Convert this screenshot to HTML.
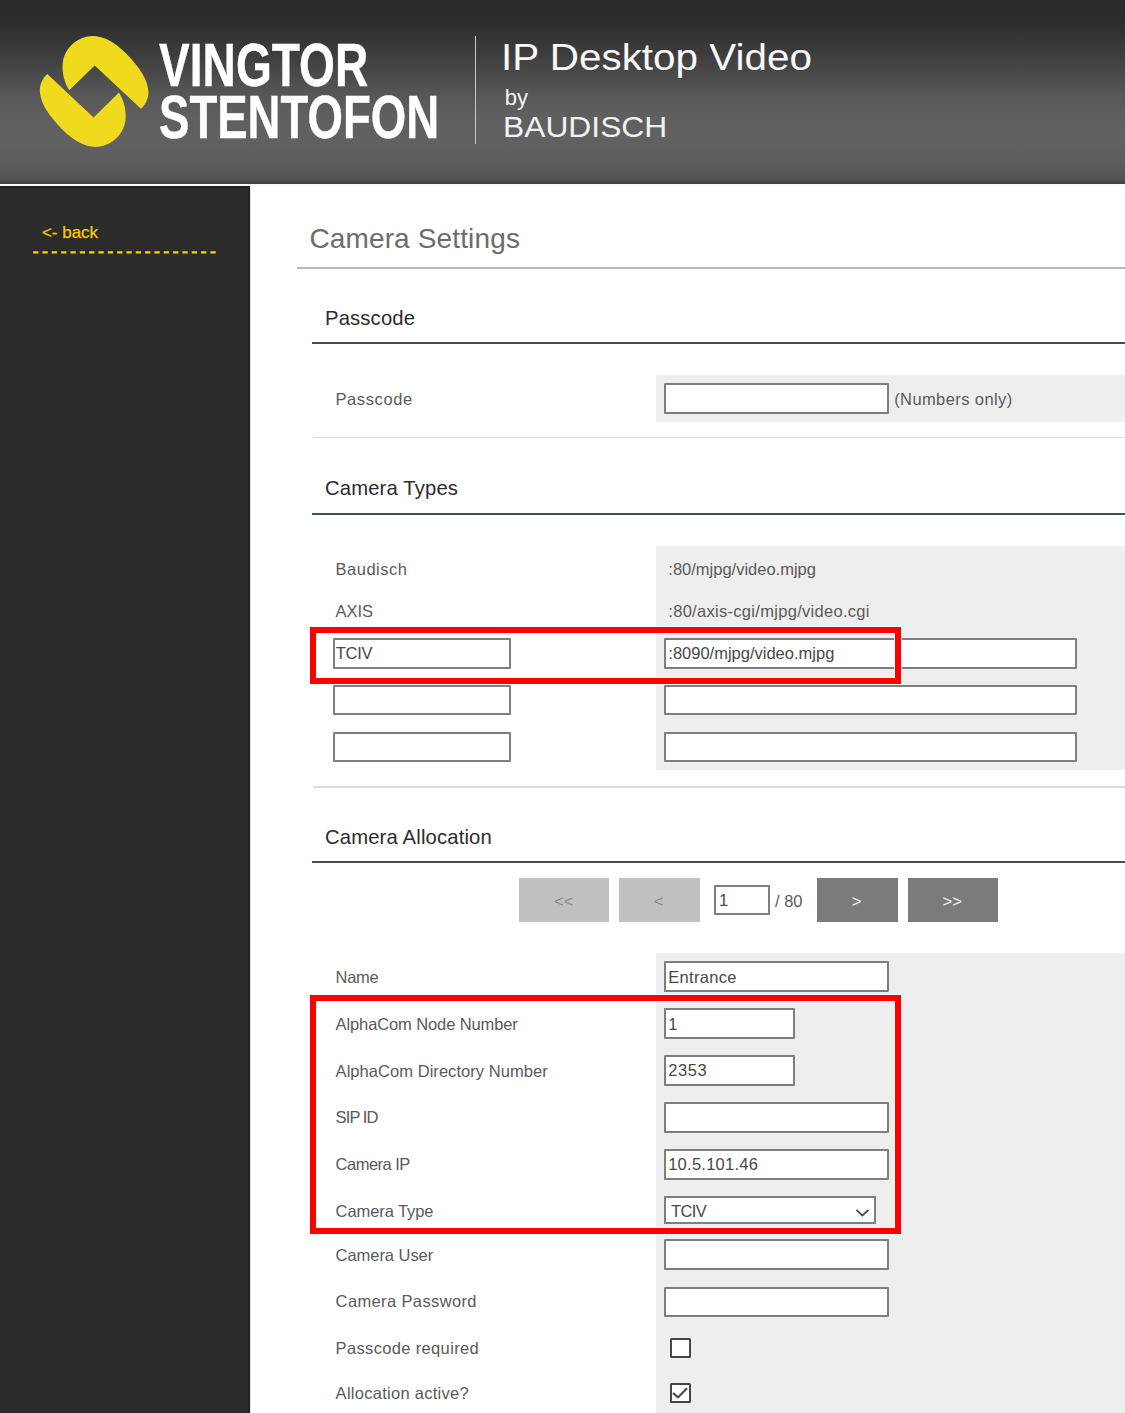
<!DOCTYPE html>
<html><head><meta charset="utf-8"><style>
html,body{margin:0;padding:0;width:1125px;height:1413px;overflow:hidden;background:#fff;}
.t{position:absolute;white-space:nowrap;font-family:"Liberation Sans",sans-serif;}
.b{position:absolute;}
</style></head><body>
<div class="b" style="left:0.00px;top:0.00px;width:1125.00px;height:184.00px;background:linear-gradient(to bottom,#2a2a2a 0px,#2c2c2c 18px,#3b3b3b 50px,#4a4a4a 75px,#575757 95px,#5f5f5f 115px,#616161 140px,#5d5d5d 163px,#555 176px,#4e4e4e 181px,#444 183px,#404040 184px);"></div>
<div class="b" style="left:0.00px;top:184.00px;width:1125.00px;height:2.00px;background:#fafafa;"></div>
<div class="b" style="left:0.00px;top:186.00px;width:250.00px;height:1227.00px;background:#2b2b2b;"></div>
<div class="b" style="left:0.00px;top:186.00px;width:250.00px;height:1.80px;background:#1c1c1c;"></div>
<div class="b" style="left:248.00px;top:186.00px;width:2.00px;height:1227.00px;background:#222;"></div>
<div class="b" style="left:250.00px;top:186.00px;width:1.00px;height:1227.00px;background:#e4e4e4;"></div>
<svg class="b" style="left:30px;top:25px;width:130px;height:130px" viewBox="0 0 1125 1125">
<g fill="#f0da1e">
<path d="M340,565 L560,350 L960,725 C1005,685 1030,625 1024,565 C1014,465 950,370 830,245 C735,150 640,95 540,95 C420,97 300,190 283,330 C275,420 300,500 340,565 Z"/>
<path d="M340,565 L560,350 L960,725 C1005,685 1030,625 1024,565 C1014,465 950,370 830,245 C735,150 640,95 540,95 C420,97 300,190 283,330 C275,420 300,500 340,565 Z" transform="rotate(180 555 575)"/>
</g></svg>
<div class="t" style="left:159.20px;top:34.66px;font-size:61px;line-height:61px;color:#fff;font-weight:bold;transform:scaleX(0.756);transform-origin:0 0;-webkit-text-stroke:0.4px #fff;">VINGTOR</div>
<div class="t" style="left:158.50px;top:86.66px;font-size:61px;line-height:61px;color:#fff;font-weight:bold;transform:scaleX(0.747);transform-origin:0 0;-webkit-text-stroke:0.4px #fff;">STENTOFON</div>
<div class="b" style="left:474.70px;top:36.00px;width:1.50px;height:108.00px;background:#c9c9c9;"></div>
<div class="t" style="left:500.80px;top:38.68px;font-size:37px;line-height:37px;color:#f8f8f8;font-weight:normal;transform:scaleX(1.093);transform-origin:0 0;">IP Desktop Video</div>
<div class="t" style="left:504.80px;top:86.58px;font-size:22px;line-height:22px;color:#f4f4f4;font-weight:normal;">by</div>
<div class="t" style="left:503.30px;top:112.65px;font-size:29px;line-height:29px;color:#f2f2f2;font-weight:normal;transform:scaleX(1.096);transform-origin:0 0;">BAUDISCH</div>
<div class="t" style="left:41.90px;top:223.81px;font-size:17px;line-height:17px;color:#f0cc00;font-weight:normal;-webkit-text-stroke:0.25px #f0cc00;">&lt;- back</div>
<svg class="b" style="left:32.5px;top:250px;width:184px;height:5px" viewBox="0 0 184 5"><line x1="0" y1="2.4" x2="183" y2="2.4" stroke="#f8d400" stroke-width="2.2" stroke-dasharray="5.3 4.03" stroke-dashoffset="-0.1"/></svg>
<div class="t" style="left:309.40px;top:224.60px;font-size:28px;line-height:28px;color:#6c6c6c;font-weight:normal;letter-spacing:0.14px;">Camera Settings</div>
<div class="b" style="left:297.00px;top:267.00px;width:828.00px;height:2.00px;background:#b8b8b8;"></div>
<div class="t" style="left:325.00px;top:307.96px;font-size:20.25px;line-height:20.25px;color:#2c2c2c;font-weight:normal;letter-spacing:0.15px;">Passcode</div>
<div class="b" style="left:312.30px;top:342.00px;width:812.70px;height:2.00px;background:#465050;"></div>
<div class="b" style="left:656.00px;top:375.00px;width:469.00px;height:46.50px;background:#eeeeee;"></div>
<div class="t" style="left:335.40px;top:390.53px;font-size:16.5px;line-height:16.5px;color:#5a5a5a;font-weight:normal;letter-spacing:0.614px;">Passcode</div>
<div class="b" style="left:664.00px;top:383.00px;width:225.00px;height:31.00px;background:#fff;border:2px solid #7e7e7e;border-radius:1px;box-sizing:border-box;"></div>
<div class="t" style="left:894.20px;top:390.53px;font-size:16.5px;line-height:16.5px;color:#5a5a5a;font-weight:normal;letter-spacing:0.400px;">(Numbers only)</div>
<div class="b" style="left:312.50px;top:436.95px;width:812.50px;height:1.50px;background:#dcdcdc;"></div>
<div class="t" style="left:325.00px;top:478.46px;font-size:20.25px;line-height:20.25px;color:#2c2c2c;font-weight:normal;letter-spacing:0.15px;">Camera Types</div>
<div class="b" style="left:312.30px;top:512.50px;width:812.70px;height:2.00px;background:#465050;"></div>
<div class="b" style="left:656.00px;top:545.50px;width:469.00px;height:224.90px;background:#eeeeee;"></div>
<div class="t" style="left:335.50px;top:560.93px;font-size:16.5px;line-height:16.5px;color:#5a5a5a;font-weight:normal;letter-spacing:0.514px;">Baudisch</div>
<div class="t" style="left:668.30px;top:560.93px;font-size:16.5px;line-height:16.5px;color:#5a5a5a;font-weight:normal;">:80/mjpg/video.mjpg</div>
<div class="t" style="left:335.50px;top:603.23px;font-size:16.5px;line-height:16.5px;color:#5a5a5a;font-weight:normal;">AXIS</div>
<div class="t" style="left:668.30px;top:603.23px;font-size:16.5px;line-height:16.5px;color:#5a5a5a;font-weight:normal;letter-spacing:0.296px;">:80/axis-cgi/mjpg/video.cgi</div>
<div class="b" style="left:333.00px;top:638.00px;width:178.00px;height:30.80px;background:#fff;border:2px solid #7e7e7e;border-radius:1px;box-sizing:border-box;"></div>
<div class="t" style="left:335.70px;top:645.43px;font-size:16.5px;line-height:16.5px;color:#484848;font-weight:normal;letter-spacing:-0.233px;">TCIV</div>
<div class="b" style="left:664.00px;top:638.00px;width:412.50px;height:30.80px;background:#fff;border:2px solid #7e7e7e;border-radius:1px;box-sizing:border-box;"></div>
<div class="t" style="left:668.30px;top:645.43px;font-size:16.5px;line-height:16.5px;color:#484848;font-weight:normal;">:8090/mjpg/video.mjpg</div>
<div class="b" style="left:333.00px;top:685.20px;width:178.00px;height:30.30px;background:#fff;border:2px solid #7e7e7e;border-radius:1px;box-sizing:border-box;"></div>
<div class="b" style="left:664.00px;top:685.20px;width:412.50px;height:30.30px;background:#fff;border:2px solid #7e7e7e;border-radius:1px;box-sizing:border-box;"></div>
<div class="b" style="left:333.00px;top:731.80px;width:178.00px;height:30.60px;background:#fff;border:2px solid #7e7e7e;border-radius:1px;box-sizing:border-box;"></div>
<div class="b" style="left:664.00px;top:731.80px;width:412.50px;height:30.60px;background:#fff;border:2px solid #7e7e7e;border-radius:1px;box-sizing:border-box;"></div>
<div class="b" style="left:312.50px;top:786.25px;width:812.50px;height:1.50px;background:#dcdcdc;"></div>
<div class="t" style="left:325.00px;top:826.96px;font-size:20.25px;line-height:20.25px;color:#2c2c2c;font-weight:normal;letter-spacing:0.15px;">Camera Allocation</div>
<div class="b" style="left:312.30px;top:861.00px;width:812.70px;height:2.00px;background:#465050;"></div>
<div class="b" style="left:519.00px;top:878.40px;width:90.00px;height:43.30px;background:#c0c0c0;"></div>
<div class="b" style="left:619.00px;top:878.40px;width:81.00px;height:43.30px;background:#c0c0c0;"></div>
<div class="b" style="left:817.00px;top:878.40px;width:81.40px;height:43.30px;background:#7b7b7b;"></div>
<div class="b" style="left:908.00px;top:878.40px;width:90.40px;height:43.30px;background:#7b7b7b;"></div>
<div class="t" style="left:554.00px;top:892.53px;font-size:16.5px;line-height:16.5px;color:#8a8a8a;font-weight:normal;transform:scaleY(0.95);">&lt;&lt;</div>
<div class="t" style="left:653.80px;top:892.53px;font-size:16.5px;line-height:16.5px;color:#8a8a8a;font-weight:normal;transform:scaleY(0.95);">&lt;</div>
<div class="t" style="left:851.80px;top:892.53px;font-size:16.5px;line-height:16.5px;color:#f4f4f4;font-weight:normal;transform:scaleY(0.95);">&gt;</div>
<div class="t" style="left:942.50px;top:892.53px;font-size:16.5px;line-height:16.5px;color:#f4f4f4;font-weight:normal;transform:scaleY(0.95);">&gt;&gt;</div>
<div class="b" style="left:714.30px;top:885.20px;width:55.40px;height:30.30px;background:#fff;border:2px solid #7e7e7e;border-radius:1px;box-sizing:border-box;"></div>
<div class="t" style="left:719.00px;top:892.38px;font-size:16.5px;line-height:16.5px;color:#484848;font-weight:normal;">1</div>
<div class="t" style="left:775.00px;top:892.53px;font-size:16.5px;line-height:16.5px;color:#5a5a5a;font-weight:normal;">/ 80</div>
<div class="b" style="left:656.20px;top:953.30px;width:468.80px;height:459.70px;background:#eeeeee;"></div>
<div class="t" style="left:335.60px;top:968.73px;font-size:16.5px;line-height:16.5px;color:#5a5a5a;font-weight:normal;letter-spacing:-0.300px;">Name</div>
<div class="b" style="left:664.00px;top:961.20px;width:225.00px;height:30.60px;background:#fff;border:2px solid #7e7e7e;border-radius:1px;box-sizing:border-box;"></div>
<div class="t" style="left:668.20px;top:968.53px;font-size:16.5px;line-height:16.5px;color:#484848;font-weight:normal;letter-spacing:0.314px;">Entrance</div>
<div class="t" style="left:335.60px;top:1015.63px;font-size:16.5px;line-height:16.5px;color:#5a5a5a;font-weight:normal;letter-spacing:-0.111px;">AlphaCom Node Number</div>
<div class="b" style="left:664.00px;top:1008.40px;width:130.80px;height:30.40px;background:#fff;border:2px solid #7e7e7e;border-radius:1px;box-sizing:border-box;"></div>
<div class="t" style="left:668.20px;top:1015.63px;font-size:16.5px;line-height:16.5px;color:#484848;font-weight:normal;">1</div>
<div class="t" style="left:335.60px;top:1062.83px;font-size:16.5px;line-height:16.5px;color:#5a5a5a;font-weight:normal;letter-spacing:0.050px;">AlphaCom Directory Number</div>
<div class="b" style="left:664.00px;top:1055.20px;width:130.80px;height:30.40px;background:#fff;border:2px solid #7e7e7e;border-radius:1px;box-sizing:border-box;"></div>
<div class="t" style="left:668.20px;top:1062.43px;font-size:16.5px;line-height:16.5px;color:#484848;font-weight:normal;letter-spacing:0.600px;">2353</div>
<div class="t" style="left:335.60px;top:1109.43px;font-size:16.5px;line-height:16.5px;color:#5a5a5a;font-weight:normal;letter-spacing:-0.900px;">SIP ID</div>
<div class="b" style="left:664.00px;top:1101.90px;width:225.00px;height:30.90px;background:#fff;border:2px solid #7e7e7e;border-radius:1px;box-sizing:border-box;"></div>
<div class="t" style="left:335.60px;top:1156.03px;font-size:16.5px;line-height:16.5px;color:#5a5a5a;font-weight:normal;letter-spacing:-0.512px;">Camera IP</div>
<div class="b" style="left:664.00px;top:1149.00px;width:225.00px;height:30.60px;background:#fff;border:2px solid #7e7e7e;border-radius:1px;box-sizing:border-box;"></div>
<div class="t" style="left:668.20px;top:1156.33px;font-size:16.5px;line-height:16.5px;color:#484848;font-weight:normal;letter-spacing:0.260px;">10.5.101.46</div>
<div class="t" style="left:335.60px;top:1203.03px;font-size:16.5px;line-height:16.5px;color:#5a5a5a;font-weight:normal;letter-spacing:-0.090px;">Camera Type</div>
<div class="t" style="left:335.60px;top:1247.03px;font-size:16.5px;line-height:16.5px;color:#5a5a5a;font-weight:normal;letter-spacing:-0.050px;">Camera User</div>
<div class="b" style="left:664.00px;top:1239.40px;width:225.00px;height:30.40px;background:#fff;border:2px solid #7e7e7e;border-radius:1px;box-sizing:border-box;"></div>
<div class="t" style="left:335.60px;top:1293.43px;font-size:16.5px;line-height:16.5px;color:#5a5a5a;font-weight:normal;letter-spacing:0.371px;">Camera Password</div>
<div class="b" style="left:664.00px;top:1286.50px;width:225.00px;height:30.60px;background:#fff;border:2px solid #7e7e7e;border-radius:1px;box-sizing:border-box;"></div>
<div class="t" style="left:335.60px;top:1340.03px;font-size:16.5px;line-height:16.5px;color:#5a5a5a;font-weight:normal;letter-spacing:0.344px;">Passcode required</div>
<div class="t" style="left:335.60px;top:1385.43px;font-size:16.5px;line-height:16.5px;color:#5a5a5a;font-weight:normal;letter-spacing:0.276px;">Allocation active?</div>
<div class="b" style="left:664.00px;top:1195.80px;width:212.40px;height:27.80px;background:#fff;border:2px solid #7e7e7e;border-radius:1px;box-sizing:border-box;"></div>
<div class="t" style="left:670.90px;top:1202.53px;font-size:16.5px;line-height:16.5px;color:#484848;font-weight:normal;letter-spacing:-0.55px;">TCIV</div>
<svg class="b" style="left:850px;top:1200px;width:24px;height:24px" viewBox="0 0 24 24"><path d="M6.4,9.9 L12.4,15.6 L18.5,9.8" fill="none" stroke="#454545" stroke-width="1.8"/></svg>
<div class="b" style="left:670.30px;top:1337.90px;width:20.60px;height:20.10px;background:#fff;border:2px solid #454545;border-radius:1.5px;box-sizing:border-box;"></div>
<div class="b" style="left:670.30px;top:1383.40px;width:20.60px;height:20.10px;background:#fff;border:2px solid #454545;border-radius:1.5px;box-sizing:border-box;"></div>
<svg class="b" style="left:670.3px;top:1383.4px;width:20px;height:20px" viewBox="0 0 20 20"><path d="M3,10 L8,14.4 L17,5.2" fill="none" stroke="#454545" stroke-width="2.1"/></svg>
<div class="b" style="left:310.40px;top:627.00px;width:590.40px;height:57.20px;border:6px solid #ff0000;box-sizing:border-box;box-shadow:0 0 0 1px rgba(235,255,255,.8),inset 0 0 0 1px rgba(235,255,255,.8);"></div>
<div class="b" style="left:310.10px;top:995.20px;width:590.70px;height:239.20px;border:6px solid #ff0000;box-sizing:border-box;box-shadow:0 0 0 1px rgba(235,255,255,.8),inset 0 0 0 1px rgba(235,255,255,.8);"></div>
</body></html>
